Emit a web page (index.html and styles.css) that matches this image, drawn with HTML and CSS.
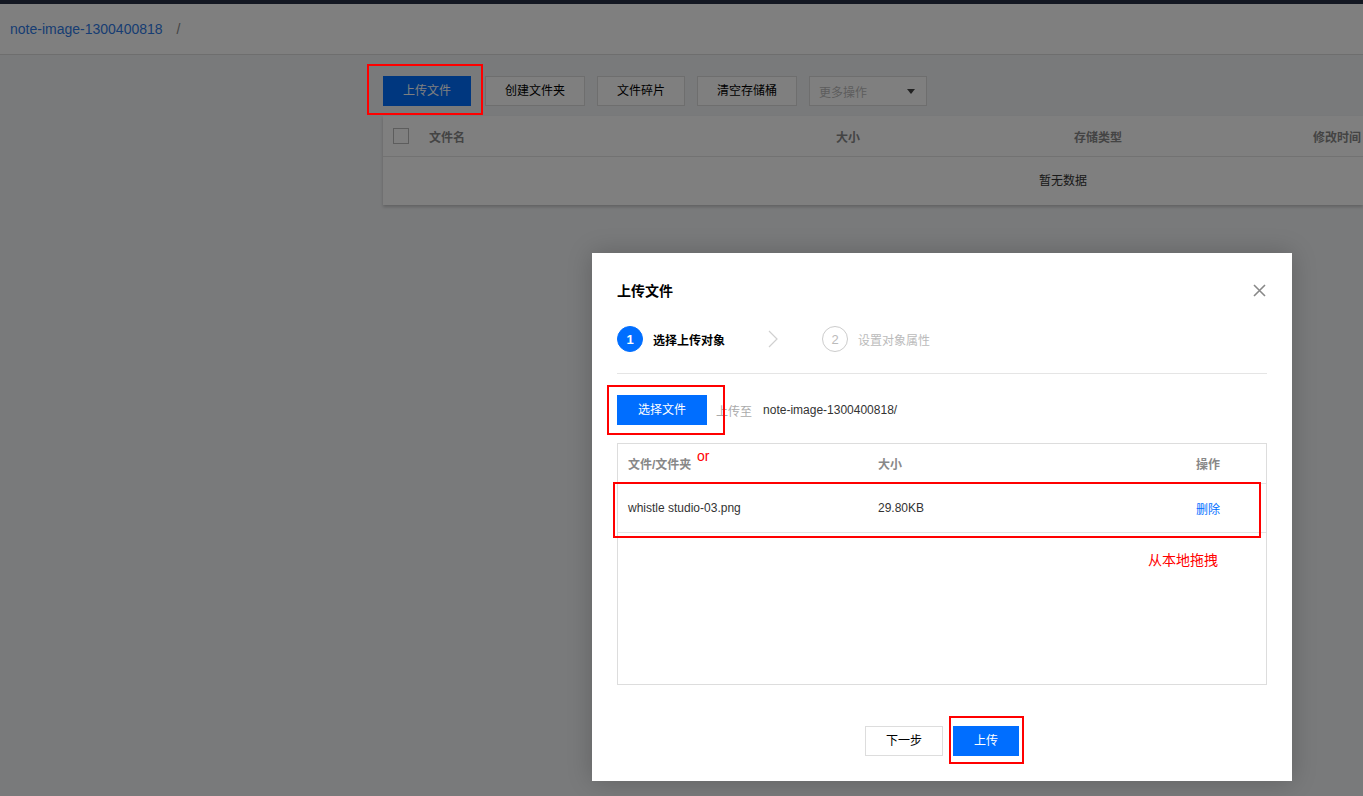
FILE: index.html
```html
<!DOCTYPE html>
<html lang="zh">
<head>
    <meta charset="UTF-8">
    <meta name="viewport" content="width=device-width, initial-scale=1.0">
    <title>上传文件</title>
    <link rel="stylesheet" href="styles.css">
</head>
<body>
    <div class="topbar"></div>
    <header class="crumb">
        <a class="crumb-link">note-image-1300400818</a>
        <span class="crumb-sep">/</span>
    </header>

    <main class="content">
        <div class="toolbar">
            <button class="btn btn-primary">上传文件</button>
            <button class="btn">创建文件夹</button>
            <button class="btn">文件碎片</button>
            <button class="btn">清空存储桶</button>
            <div class="select">
                <span>更多操作</span>
                <span class="caret"></span>
            </div>
        </div>

        <div class="file-table">
            <div class="file-head">
                <span class="checkbox"></span>
                <span>文件名</span>
                <span>大小</span>
                <span>存储类型</span>
                <span>修改时间</span>
            </div>
            <div class="file-empty">暂无数据</div>
        </div>
    </main>

    <div class="backdrop"></div>

    <div class="dialog">
        <div class="dialog-title">
            <span>上传文件</span>
            <svg class="close" width="13" height="13" viewBox="0 0 13 13">
                <path d="M1 1 L12 12 M12 1 L1 12" stroke="#888" stroke-width="1.6" fill="none"/>
            </svg>
        </div>

        <div class="steps">
            <div class="step step-active">
                <span class="step-num">1</span>
                <span class="step-label">选择上传对象</span>
            </div>
            <svg class="step-arrow" width="10" height="18" viewBox="0 0 10 18">
                <polyline points="1,1 9,9 1,17" stroke="#d0d0d0" stroke-width="1.2" fill="none"/>
            </svg>
            <div class="step">
                <span class="step-num">2</span>
                <span class="step-label">设置对象属性</span>
            </div>
        </div>

        <div class="pick-row">
            <button class="btn btn-primary">选择文件</button>
            <span class="pick-hint">上传至</span>
            <span class="pick-path">note-image-1300400818/</span>
        </div>

        <div class="upload-list">
            <div class="upload-head">
                <span>文件/文件夹</span>
                <span>大小</span>
                <span>操作</span>
            </div>
            <div class="upload-row">
                <span>whistle studio-03.png</span>
                <span>29.80KB</span>
                <a class="link">删除</a>
            </div>
        </div>

        <div class="dialog-footer">
            <button class="btn">下一步</button>
            <button class="btn btn-primary">上传</button>
        </div>
    </div>

    <!-- 标注 -->
    <div class="mark mark-toolbar"></div>
    <div class="mark mark-pick"></div>
    <div class="mark mark-row"></div>
    <div class="mark mark-submit"></div>
    <span class="note note-or">or</span>
    <span class="note note-drag">从本地拖拽</span>
</body>
</html>
```

FILE: styles.css
```css
html, body {
    margin: 0;
    padding: 0;
    height: 796px;
    overflow: hidden;
}
body {
    position: relative;
    font-family: "Liberation Sans", "Noto Sans CJK SC", sans-serif;
    font-size: 12px;
    color: #333;
    background: #f3f4f6;
}
.topbar {
    height: 4px;
    background: #262f44;
}
.crumb {
    height: 50px;
    line-height: 50px;
    background: #fff;
    border-bottom: 1px solid #dcdcdc;
    padding-left: 10px;
    font-size: 14px;
}
.crumb-link {
    color: #2f7ae6;
}
.crumb-sep {
    color: #888;
    margin-left: 10px;
}
.content {
    margin-left: 383px;
    padding-top: 21px;
}
.toolbar {
    display: flex;
    gap: 12px;
    height: 30px;
}
.toolbar .btn {
    padding: 0 19px;
}
.toolbar .btn-primary {
    margin-right: 2px;
}
.btn {
    height: 30px;
    padding: 0 20px;
    border: 1px solid #ddd;
    background: #fff;
    color: #000;
    font-family: inherit;
    font-size: 12px;
    line-height: 28px;
    white-space: nowrap;
    cursor: pointer;
}
.btn-primary {
    background: #006eff;
    border-color: #006eff;
    color: #fff;
}
.select {
    box-sizing: border-box;
    width: 118px;
    height: 30px;
    border: 1px solid #ddd;
    background: #fff;
    color: #bbb;
    display: flex;
    align-items: center;
    justify-content: space-between;
    padding: 0 11px 0 9px;
}
.caret {
    width: 0;
    height: 0;
    border-left: 4px solid transparent;
    border-right: 4px solid transparent;
    border-top: 5px solid #444;
}
.file-table {
    margin-top: 10px;
    width: 980px;
    background: #fff;
    box-shadow: 0 2px 3px rgba(0, 0, 0, 0.2);
}
.file-head {
    display: grid;
    grid-template-columns: 36px 407px 238px 239px 50px;
    align-items: center;
    height: 40px;
    padding-left: 10px;
    border-bottom: 1px solid #e5e5e5;
    color: #888;
    font-weight: bold;
    white-space: nowrap;
}
.checkbox {
    width: 14px;
    height: 14px;
    border: 1px solid #bbb;
    background: #fff;
}
.file-empty {
    height: 48px;
    line-height: 48px;
    padding-left: 380px;
    text-align: center;
    color: #333;
}
.backdrop {
    position: absolute;
    top: 0;
    left: 0;
    width: 100%;
    height: 100%;
    background: rgba(0, 0, 0, 0.5);
}
.dialog {
    position: absolute;
    left: 592px;
    top: 253px;
    width: 700px;
    box-sizing: border-box;
    padding: 0 25px 25px;
    background: #fff;
    box-shadow: 0 0 24px rgba(0, 0, 0, 0.2);
}
.dialog-title {
    display: flex;
    justify-content: space-between;
    align-items: center;
    padding-top: 27px;
    height: 20px;
    font-size: 14px;
    font-weight: bold;
    color: #000;
}
.close {
    margin-right: 1px;
}
.steps {
    display: flex;
    align-items: center;
    margin-top: 26px;
    padding-bottom: 21px;
    border-bottom: 1px solid #e5e5e5;
}
.step {
    display: flex;
    align-items: center;
    gap: 10px;
    color: #bbb;
}
.step-num {
    box-sizing: border-box;
    width: 26px;
    height: 26px;
    border-radius: 50%;
    border: 1px solid #ccc;
    display: flex;
    align-items: center;
    justify-content: center;
    font-size: 13px;
    color: #bbb;
}
.step-active .step-num {
    background: #006eff;
    border-color: #006eff;
    color: #fff;
    font-weight: bold;
}
.step-active .step-label {
    color: #000;
    font-weight: bold;
}
.step-arrow {
    margin: 0 44px 0 43px;
}
.pick-row {
    display: flex;
    align-items: center;
    margin-top: 21px;
}
.pick-hint {
    color: #aaa;
    margin-left: 9px;
}
.pick-path {
    color: #333;
    margin-left: 11px;
}
.upload-list {
    margin-top: 18px;
    height: 242px;
    box-sizing: border-box;
    border: 1px solid #ddd;
}
.upload-head,
.upload-row {
    display: grid;
    grid-template-columns: 250px 318px auto;
    align-items: center;
    padding: 0 10px;
    border-bottom: 1px solid #e5e5e5;
}
.upload-head {
    height: 39px;
    color: #888;
    font-weight: bold;
}
.upload-row {
    height: 48px;
    color: #333;
}
.link {
    color: #006eff;
}
.dialog-footer {
    display: flex;
    justify-content: center;
    gap: 10px;
    margin-top: 41px;
}
.mark {
    position: absolute;
    border: 2px solid #f00;
    box-sizing: border-box;
}
.mark-toolbar {
    left: 367px;
    top: 64px;
    width: 116px;
    height: 51px;
}
.mark-pick {
    left: 607px;
    top: 385px;
    width: 118px;
    height: 50px;
}
.mark-row {
    left: 613px;
    top: 482px;
    width: 648px;
    height: 56px;
}
.mark-submit {
    left: 949px;
    top: 716px;
    width: 75px;
    height: 48px;
}
.note {
    position: absolute;
    color: #f00;
    font-size: 14px;
    line-height: 18px;
}
.note-or {
    left: 697px;
    top: 447px;
}
.note-drag {
    left: 1148px;
    top: 551px;
}
```
